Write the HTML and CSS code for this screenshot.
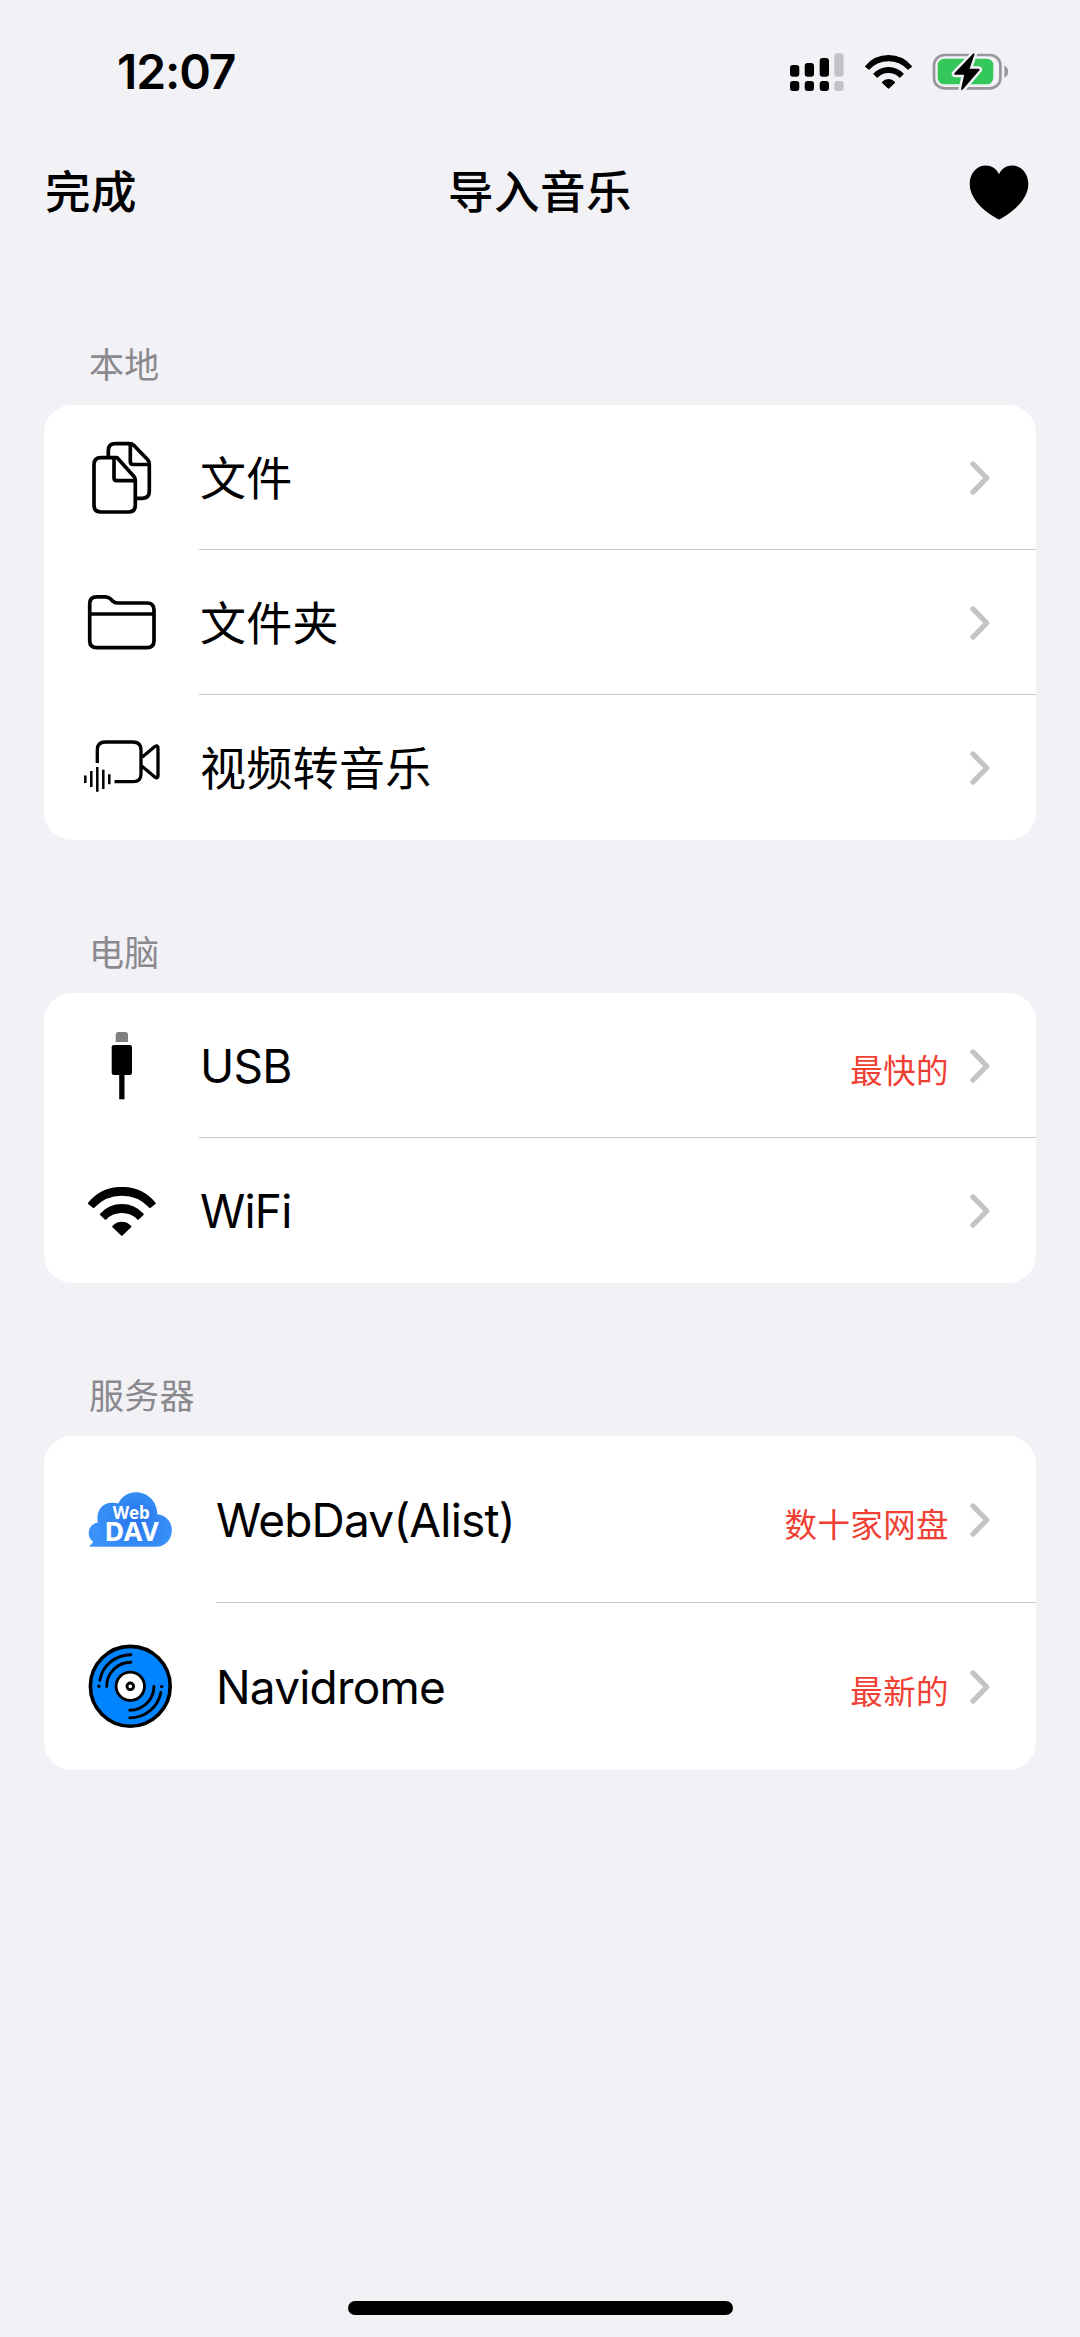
FILE: index.html
```html
<!DOCTYPE html>
<html lang="zh-CN">
<head>
<meta charset="utf-8">
<title>导入音乐</title>
<link rel="stylesheet" href="styles.css">
</head>
<body>
<svg class="defs" width="0" height="0" aria-hidden="true">
  <symbol id="wifi" viewBox="15.7 48.9 68.2 49">
    <g stroke="#000" stroke-width="2" stroke-linejoin="round">
      <path d="M16.8 65.3A43 43 0 0 1 82.8 65.3L78.1 69A38.7 38.7 0 0 0 21.5 69Z"/>
      <path d="M28.8 76.3A28.4 28.4 0 0 1 70.8 76.3L66.1 80.7A23.1 23.1 0 0 0 33.5 80.7Z"/>
      <path d="M41.2 88.6A11.4 11.4 0 0 1 58.4 88.6L49.8 96.8Z"/>
    </g>
  </symbol>
  <symbol id="chevron" viewBox="0 0 20 34">
    <path d="M2.9 2.9L16.8 17L2.9 31.1" fill="none" stroke="#c4c4c6" stroke-width="5.2" stroke-linecap="round" stroke-linejoin="round"/>
  </symbol>
</svg>
<div class="screen">
  <div class="status">
    <span class="time">12:07</span>
    <div class="indicators">
      <svg width="54" height="38" viewBox="0 0 54 38">
        <rect x="0" y="12" width="9.3" height="11.7" rx="3"/>
        <rect x="14.7" y="10" width="9.3" height="13.7" rx="3"/>
        <rect x="29.7" y="5" width="9.3" height="18.7" rx="3"/>
        <rect x="44.3" y="0.3" width="9.3" height="23.4" rx="3" fill="#c3c2c7"/>
        <rect x="0" y="28" width="9.3" height="10" rx="3"/>
        <rect x="14.7" y="28" width="9.3" height="10" rx="3"/>
        <rect x="29.7" y="28" width="9.3" height="10" rx="3"/>
        <rect x="44.3" y="28" width="9.3" height="10" rx="3" fill="#c3c2c7"/>
      </svg>
      <svg class="wifi-small" width="47" height="34"><use href="#wifi"/></svg>
      <svg width="77" height="40" viewBox="0 0 77 40">
        <rect x="2" y="3" width="66.4" height="33.4" rx="10.5" fill="none" stroke="#98979c" stroke-width="2.7"/>
        <rect x="5.7" y="6.7" width="55.6" height="25.6" rx="6.5" fill="#34c759"/>
        <path d="M72.4 13.7C77.4 15.2 77.4 24.2 72.4 25.7Z" fill="#98979c"/>
        <path d="M41.2 1.6L22.4 21.2Q21.6 22.6 23.2 22.7L32.2 22.7L29 37.2Q29.4 38.6 30.8 37.6L47.4 18.2Q48.2 16.8 46.6 16.7L37.6 16.7L42.6 2.2Q42.4 1 41.2 1.6Z" stroke="#f2f1f6" stroke-width="5" paint-order="stroke" stroke-linejoin="round"/>
      </svg>
    </div>
  </div>
  <header class="navbar">
    <span class="done">完成</span>
    <h1 class="title">导入音乐</h1>
    <svg class="heart" width="60" height="55" viewBox="0 0 60 55">
      <path d="M30 54.5C29 54.5 27.6 53.4 26.6 52.8C11 43.6 0.7 31.6 0.7 19C0.7 8 8 0.5 16.7 0.5C22.5 0.5 27.5 3.8 30 9.2C32.5 3.8 37.5 0.5 43.3 0.5C52 0.5 59.3 8 59.3 19C59.3 31.6 49 43.6 33.4 52.8C32.4 53.4 31 54.5 30 54.5Z"/>
    </svg>
  </header>

  <h2 class="section first">本地</h2>
  <ul class="card">
    <li class="row">
      <svg class="icon" viewBox="0 0 100 145" fill="none" stroke="#000" stroke-width="3.7" stroke-linejoin="round">
        <path d="M44.5 52.7H29Q22 52.7 22 59.7V100Q22 107 29 107H56.3Q63.3 107 63.3 100V75Q63.3 73 62 71.6L46.5 54.2Q45.5 52.7 44.5 52.7Z"/>
        <path d="M42 53V72.7Q42 75.7 45 75.7H63"/>
        <path d="M36.3 52V45.7Q36.3 38.7 43.3 38.7H57.5Q60 38.7 62 40.5L75.5 54.5Q77.3 56.5 77.3 59V86.3Q77.3 93.3 70.3 93.3H64"/>
        <path d="M58.3 39V56.5Q58.3 59.5 61.3 59.5H77"/>
      </svg>
      <div class="body"><span class="label">文件</span><svg class="chev"><use href="#chevron"/></svg></div>
    </li>
    <li class="row">
      <svg class="icon" viewBox="0 0 100 145" fill="none" stroke="#000" stroke-width="3.7">
        <path d="M24.7 46.8H33.5Q36.5 46.8 38.7 49L40.5 50.9Q42.6 53 45.5 53H75Q82 53 82 60V90.7Q82 97.7 75 97.7H24.7Q17.7 97.7 17.7 90.7V53.8Q17.7 46.8 24.7 46.8Z"/>
        <path d="M18 64H82"/>
      </svg>
      <div class="body"><span class="label">文件夹</span><svg class="chev"><use href="#chevron"/></svg></div>
    </li>
    <li class="row">
      <svg class="icon" viewBox="0 0 100 145" fill="none" stroke="#000" stroke-width="3.3" stroke-linejoin="round">
        <path d="M25.3 68V55Q25.3 47 33.3 47H61Q69 47 69 55V78.7Q69 86.7 61 86.7H42.5"/>
        <path d="M70 62.3L82.8 51.6Q86 49.6 86 53V80.7Q86 84 82.8 82L70 71.3"/>
        <path stroke-width="2.5" d="M13.3 80.5V88M19.3 76V92M25.3 72V96.7M31.3 74.7V94M37.3 79.3V89.2"/>
      </svg>
      <div class="body"><span class="label">视频转音乐</span><svg class="chev"><use href="#chevron"/></svg></div>
    </li>
  </ul>

  <h2 class="section">电脑</h2>
  <ul class="card">
    <li class="row">
      <svg class="icon" viewBox="0 0 100 145">
        <path d="M43.7 49V42Q43.7 39 46.7 39H53Q56 39 56 42V49Z" fill="#808080"/>
        <rect x="39.7" y="52" width="20.3" height="30" rx="2.2"/>
        <rect x="47.2" y="81" width="5.3" height="25.3"/>
      </svg>
      <div class="body"><span class="label latin">USB</span><span class="tag">最快的</span><svg class="chev"><use href="#chevron"/></svg></div>
    </li>
    <li class="row">
      <svg class="icon" viewBox="0 0 100 145"><use href="#wifi" x="15.7" y="48.9" width="68.2" height="49"/></svg>
      <div class="body"><span class="label latin">WiFi</span><svg class="chev"><use href="#chevron"/></svg></div>
    </li>
  </ul>

  <h2 class="section">服务器</h2>
  <ul class="card servers">
    <li class="row">
      <svg class="icon" viewBox="0 0 84 167">
        <defs><radialGradient id="cloud" gradientUnits="userSpaceOnUse" cx="48" cy="84" r="46"><stop offset="0" stop-color="#2670ee"/><stop offset="0.5" stop-color="#3389f4"/><stop offset="1" stop-color="#3b93fa"/></radialGradient></defs>
        <path d="M1 110.8L5.3 106C2.5 104 0.7 101 0.7 97.3C0.7 91.3 4.5 87.2 9.9 86.5C7.6 76 13.5 66.7 23.7 66.7Q27.5 66.5 30.3 67.5C33.5 60.5 40 56.2 48 56.2C60 56.2 69.5 66 69.3 78.3C78 79 83.9 86 83.9 94.3C83.9 103.7 77 110.8 68 110.8Z" fill="url(#cloud)"/>
        <text class="logo-web" x="43.3" y="83.3" text-anchor="middle" textLength="37" lengthAdjust="spacingAndGlyphs">Web</text>
        <text class="logo-dav" x="43.6" y="105" text-anchor="middle" textLength="54" lengthAdjust="spacingAndGlyphs">DAV</text>
      </svg>
      <div class="body"><span class="label latin">WebDav(Alist)</span><span class="tag">数十家网盘</span><svg class="chev"><use href="#chevron"/></svg></div>
    </li>
    <li class="row">
      <svg class="icon" viewBox="0 0 84 167" fill="none" stroke="#000" stroke-width="2.9" stroke-linecap="round">
        <circle cx="42.3" cy="83.3" r="39.9" fill="#0084ff" stroke-width="3.6"/>
        <circle cx="42.3" cy="83.3" r="14.2" fill="#fff"/>
        <circle cx="42.3" cy="83.3" r="3.3"/>
        <path d="M42.8 51.7C27.5 51.7 14.5 62.5 11.8 77.2M42.8 59.3C29.5 59.3 18.7 70 18.7 83.5"/>
        <path d="M41.8 114.9C57.1 114.9 70.1 104.1 72.8 89.4M41.8 107.3C55.1 107.3 65.9 96.6 65.9 83.4"/>
        <path d="M10.8 83.2H10.9M73.7 83.6H73.8" stroke-width="3.4"/>
      </svg>
      <div class="body"><span class="label latin">Navidrome</span><span class="tag">最新的</span><svg class="chev"><use href="#chevron"/></svg></div>
    </li>
  </ul>
  <div class="home-bar"></div>
</div>
</body>
</html>
```
FILE: styles.css
```css
* { box-sizing: border-box; }
body { margin: 0; background: #f2f1f6; color: #000; font-family: Inter, "Noto Sans CJK SC", sans-serif; }
.defs { position: absolute; }
svg { display: block; flex: none; }
.screen { display: flex; flex-direction: column; width: 1080px; height: 2337px; padding-bottom: 22px; }

.status { display: flex; justify-content: space-between; align-items: center; height: 144px; padding: 0 71px 0 117px; }
.time { font-size: 48px; font-weight: 600; line-height: 60px; letter-spacing: -1.1px; }
.indicators { display: flex; align-items: center; }
.wifi-small { margin: 0 20px 0 21px; }

.navbar { display: grid; grid-template-columns: 1fr auto 1fr; align-items: center; height: 98px; padding: 0 45px; }
.done, .title { margin: 0; font-size: 45.5px; font-weight: 500; line-height: 66px; letter-spacing: 0.5px; }
.heart { justify-self: end; margin: 0 6px 2px 0; }

.section { height: 62px; margin: 91px 0 0 89px; font-size: 35px; font-weight: 400; line-height: 44px; letter-spacing: 0.3px; color: #8a898e; }
.section.first { margin-top: 101px; }
.card { margin: 0 44px; padding: 0; list-style: none; background: #fff; border-radius: 28px; overflow: hidden; }
.row { display: flex; height: 145px; padding-left: 28px; }
.icon { width: 100px; height: 145px; margin-right: 27px; }
.body { flex: 1; display: flex; align-items: center; height: 145px; padding-right: 46px; }
.row:not(:last-child) .body { box-shadow: inset 0 -1px #c8c8ca; }
.label { flex: 1; padding-left: 1px; font-size: 46px; line-height: 66px; letter-spacing: 0.3px; }
.label.latin { letter-spacing: -0.8px; }
.tag { margin: 12px 21px 0 0; font-size: 32.5px; line-height: 44px; letter-spacing: 0.4px; color: #f04033; }
.chev { width: 20px; height: 34px; }

.servers .row { height: 167px; padding-left: 44px; }
.servers .icon { width: 84px; height: 167px; margin-right: 44px; }
.servers .body { height: 167px; }
.servers .label { padding-left: 0; }
.logo-web, .logo-dav { fill: #fff; font-family: "Noto Sans", sans-serif; font-weight: 700; }
.logo-web { font-size: 17.8px; }
.logo-dav { font-size: 26px; }

.home-bar { width: 385px; height: 14px; margin: auto auto 0; background: #000; border-radius: 7px; }
```
